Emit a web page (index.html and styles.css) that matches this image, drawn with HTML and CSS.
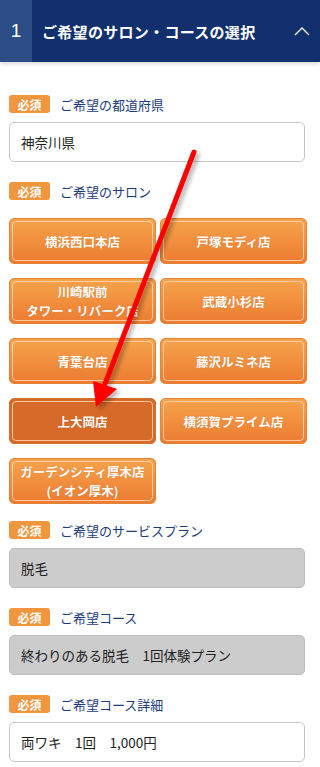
FILE: index.html
```html
<!DOCTYPE html>
<html lang="ja">
<head>
    <meta charset="UTF-8">
    <meta name="viewport" content="width=device-width, initial-scale=1.0">
    <title>ご希望のサロン・コースの選択</title>
    <link rel="stylesheet" href="styles.css">
</head>
<body>
    <div class="step_head">
        <div class="step_num">1</div>
        <div class="step_title">ご希望のサロン・コースの選択</div>
        <svg class="chevron" width="16" height="9" viewBox="0 0 16 9">
            <polyline points="1,8 8,1 15,8" fill="none" stroke="#fff" stroke-width="1.3"/>
        </svg>
    </div>

    <div class="form">
        <div class="label"><span class="must">必須</span>ご希望の都道府県</div>
        <div class="field">神奈川県</div>

        <div class="label"><span class="must">必須</span>ご希望のサロン</div>
        <div class="salons">
            <div class="salon">横浜西口本店</div>
            <div class="salon">戸塚モディ店</div>
            <div class="salon">川崎駅前<br>タワー・リバーク店</div>
            <div class="salon">武蔵小杉店</div>
            <div class="salon">青葉台店</div>
            <div class="salon">藤沢ルミネ店</div>
            <div class="salon active">上大岡店</div>
            <div class="salon">横須賀プライム店</div>
            <div class="salon">ガーデンシティ厚木店<br>(イオン厚木)</div>
        </div>

        <div class="label"><span class="must">必須</span>ご希望のサービスプラン</div>
        <div class="field grey">脱毛</div>

        <div class="label"><span class="must">必須</span>ご希望コース</div>
        <div class="field grey">終わりのある脱毛　1回体験プラン</div>

        <div class="label"><span class="must">必須</span>ご希望コース詳細</div>
        <div class="field">両ワキ　1回　1,000円</div>
    </div>

    <!-- red annotation arrow -->
    <svg class="arrow" width="320" height="767" viewBox="0 0 320 767">
        <defs>
            <filter id="shadow" x="-20%" y="-20%" width="140%" height="140%">
                <feDropShadow dx="3" dy="3" stdDeviation="2" flood-color="#000" flood-opacity="0.3"/>
            </filter>
        </defs>
        <g filter="url(#shadow)">
            <line x1="194" y1="152" x2="105" y2="384" stroke="#ff0000" stroke-width="5" stroke-linecap="round"/>
            <polygon points="96,407 93,381 105,385 117,389" fill="#ff0000"/>
        </g>
    </svg>
</body>
</html>
```

FILE: styles.css
```css
html,body{
    margin: 0;
    padding: 0;
}
body{
    position: relative;
    width: 320px;
    font-family: "Noto Sans CJK JP", "Noto Sans", sans-serif;
    background: #fff;
    color: #222;
}
.step_head{
    height: 62px;
    display: flex;
    align-items: center;
    background: #11306d;
    color: #fff;
    box-shadow: 0 2px 4px rgba(0, 0, 0, 0.15);
}
.step_num{
    width: 32px;
    height: 100%;
    display: flex;
    align-items: center;
    justify-content: center;
    background: #2c4d86;
    font-family: "Liberation Sans", sans-serif;
    font-size: 19px;
}
.step_title{
    flex: 1;
    padding-left: 10px;
    font-size: 15px;
    font-weight: bold;
    letter-spacing: 0.3px;
}
.chevron{
    margin-right: 10px;
    margin-top: 1px;
}
.form{
    padding: 33px 0 0 9px;
}
.label{
    height: 18px;
    display: flex;
    align-items: center;
    gap: 10px;
    margin-bottom: 9px;
    font-size: 13px;
    color: #1d3c7c;
}
.must{
    width: 41px;
    height: 18px;
    display: flex;
    align-items: center;
    justify-content: center;
    background: #f0963f;
    border-radius: 3px;
    color: #fff;
    font-size: 12px;
    font-weight: bold;
}
.field{
    width: 296px;
    height: 40px;
    box-sizing: border-box;
    display: flex;
    align-items: center;
    padding-left: 11px;
    margin-bottom: 20px;
    border: 1px solid #c6c6c6;
    border-radius: 5px;
    font-size: 13.5px;
    color: #222;
}
.field.grey{
    background: #cccccc;
    border-color: #bdbdbd;
}
.salons{
    width: 298px;
    display: grid;
    grid-template-columns: 147px 147px;
    column-gap: 4px;
    row-gap: 14px;
    margin-top: 18px;
    margin-bottom: 17px;
}
.salon{
    position: relative;
    height: 46px;
    box-sizing: border-box;
    display: flex;
    align-items: center;
    justify-content: center;
    text-align: center;
    border: 1px solid #e58338;
    border-radius: 5px;
    background: linear-gradient(#f6a44c, #ec7b31);
    color: #fff;
    font-size: 12.5px;
    font-weight: bold;
    line-height: 19px;
    text-shadow: 0 0 1px rgba(160, 70, 10, 0.4);
}
.salon::before{
    content: "";
    position: absolute;
    top: 2px;
    left: 2px;
    right: 2px;
    bottom: 2px;
    border: 1px solid rgba(255, 215, 175, 0.85);
    border-radius: 4px;
}
.salon.active{
    background: #d76a28;
    border-color: #d0732f;
}
.arrow{
    position: absolute;
    top: 0;
    left: 0;
    pointer-events: none;
}
```
